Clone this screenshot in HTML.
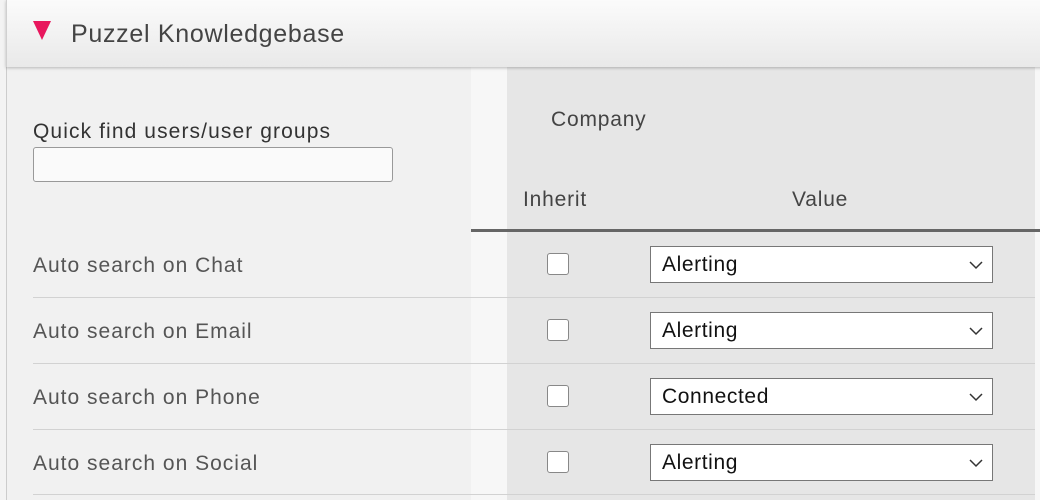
<!DOCTYPE html>
<html><head><style>
body{margin:0;width:1040px;height:500px;overflow:hidden;background:#f3f3f3;font-family:"Liberation Sans",sans-serif;position:relative}
.abs{position:absolute}
.hdr{left:6px;top:0;width:1040px;height:67px;background:linear-gradient(#fbfbfb,#e9e9e9);box-shadow:0 1px 3px rgba(0,0,0,.25);border-left:1px solid #d0d0d0;z-index:2}
.lbl{color:#555;font-size:21px;letter-spacing:1px}
.cb{width:20px;height:20px;border:1px solid #888;border-radius:3px;background:#fff}
.sel{left:650px;width:343px;height:37px;border:1px solid #777;background:#fff;font-size:21px;color:#111;box-sizing:border-box;padding:6px 0 0 11px;letter-spacing:.6px}
.sel svg{position:absolute;right:9px;top:14px}
.line{left:33px;width:1002px;height:1px;background:#d2d2d2}
.h{font-size:21px;color:#444;letter-spacing:.8px}
</style></head><body>
<div class="abs" style="left:6px;top:0;width:1px;height:500px;background:#ccc"></div>
<div class="abs" style="left:7px;top:67px;width:464px;height:433px;background:#f1f1f1"></div>
<div class="abs" style="left:471px;top:67px;width:36px;height:433px;background:#f7f7f7"></div>
<div class="abs" style="left:507px;top:67px;width:528px;height:433px;background:#e6e6e6"></div>
<div class="abs" style="left:1035px;top:67px;width:5px;height:433px;background:#f7f7f7"></div>
<div class="abs hdr"></div>
<svg class="abs" style="left:33px;top:21px;z-index:3" width="18" height="19"><polygon points="0,0 18,0 9,19" fill="#e8175d"/></svg>
<div class="abs" style="left:71px;top:20px;font-size:25px;color:#444;z-index:3;letter-spacing:.7px">Puzzel Knowledgebase</div>
<div class="abs" style="left:33px;top:120px;font-size:21px;color:#333;letter-spacing:1.1px">Quick find users/user groups</div>
<div class="abs" style="left:33px;top:147px;width:360px;height:35px;box-sizing:border-box;border:1px solid #999;border-radius:3px;background:#fafafa"></div>
<div class="abs h" style="left:551px;top:108px">Company</div>
<div class="abs h" style="left:523px;top:188px">Inherit</div>
<div class="abs h" style="left:792px;top:188px">Value</div>
<div class="abs" style="left:471px;top:229px;width:569px;height:3px;background:#666"></div>

<div class="abs lbl" style="left:33px;top:254px">Auto search on Chat</div>
<div class="abs cb" style="left:547px;top:253px"></div>
<div class="abs sel" style="top:246px">Alerting<svg width="14" height="9"><path d="M1 1l6 6 6-6" fill="none" stroke="#333" stroke-width="1.5"/></svg></div>
<div class="abs line" style="top:297px"></div>

<div class="abs lbl" style="left:33px;top:320px">Auto search on Email</div>
<div class="abs cb" style="left:547px;top:319px"></div>
<div class="abs sel" style="top:312px">Alerting<svg width="14" height="9"><path d="M1 1l6 6 6-6" fill="none" stroke="#333" stroke-width="1.5"/></svg></div>
<div class="abs line" style="top:363px"></div>

<div class="abs lbl" style="left:33px;top:386px">Auto search on Phone</div>
<div class="abs cb" style="left:547px;top:385px"></div>
<div class="abs sel" style="top:378px">Connected<svg width="14" height="9"><path d="M1 1l6 6 6-6" fill="none" stroke="#333" stroke-width="1.5"/></svg></div>
<div class="abs line" style="top:429px"></div>

<div class="abs lbl" style="left:33px;top:452px">Auto search on Social</div>
<div class="abs cb" style="left:547px;top:451px"></div>
<div class="abs sel" style="top:444px">Alerting<svg width="14" height="9"><path d="M1 1l6 6 6-6" fill="none" stroke="#333" stroke-width="1.5"/></svg></div>
<div class="abs line" style="top:494px"></div>
</body></html>
